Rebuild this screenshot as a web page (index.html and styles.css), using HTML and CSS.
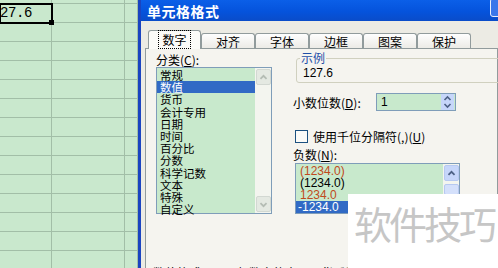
FILE: index.html
```html
<!DOCTYPE html>
<html lang="zh-CN">
<head>
    <meta charset="UTF-8">
    <title>单元格格式</title>
    <link rel="stylesheet" href="styles.css">
</head>
<body>
    <div class="screen">
        <div class="sheet">
            <div class="cell"></div><div class="cell"></div><div class="cell"></div>
            <div class="cell active"><span>127.6</span></div><div class="cell"></div><div class="cell"></div>
            <div class="cell"></div><div class="cell"></div><div class="cell"></div>
            <div class="cell"></div><div class="cell"></div><div class="cell"></div>
            <div class="cell"></div><div class="cell"></div><div class="cell"></div>
            <div class="cell"></div><div class="cell"></div><div class="cell"></div>
            <div class="cell"></div><div class="cell"></div><div class="cell"></div>
            <div class="cell"></div><div class="cell"></div><div class="cell"></div>
            <div class="cell"></div><div class="cell"></div><div class="cell"></div>
            <div class="cell"></div><div class="cell"></div><div class="cell"></div>
            <div class="cell"></div><div class="cell"></div><div class="cell"></div>
            <div class="cell"></div><div class="cell"></div><div class="cell"></div>
            <div class="cell"></div><div class="cell"></div><div class="cell"></div>
            <div class="cell"></div><div class="cell"></div><div class="cell"></div>
            <div class="cell"></div><div class="cell"></div><div class="cell"></div>
        </div>

        <div class="dialog">
            <div class="titlebar">
                <span class="title">单元格格式</span>
                <span class="close"></span>
            </div>
            <div class="body">
                <div class="tabs">
                    <div class="tab active"><span>数字</span></div>
                    <div class="tab">对齐</div>
                    <div class="tab">字体</div>
                    <div class="tab">边框</div>
                    <div class="tab">图案</div>
                    <div class="tab">保护</div>
                </div>
                <div class="panel">
                    <div class="cols">
                        <div class="left">
                            <div class="label">分类(<u>C</u>):</div>
                            <div class="listbox cats">
                                <ul>
                                    <li>常规</li>
                                    <li class="sel">数值</li>
                                    <li>货币</li>
                                    <li>会计专用</li>
                                    <li>日期</li>
                                    <li>时间</li>
                                    <li>百分比</li>
                                    <li>分数</li>
                                    <li>科学记数</li>
                                    <li>文本</li>
                                    <li>特殊</li>
                                    <li>自定义</li>
                                </ul>
                                <div class="scroll">
                                    <div class="arrow off">
                                        <svg width="15" height="15" viewBox="0 0 15 15"><polyline points="4,9 7.5,5.5 11,9" fill="none" stroke="#b4bcb4" stroke-width="2"/></svg>
                                    </div>
                                    <div class="track"></div>
                                    <div class="arrow off">
                                        <svg width="15" height="15" viewBox="0 0 15 15"><polyline points="4,6 7.5,9.5 11,6" fill="none" stroke="#b4bcb4" stroke-width="2"/></svg>
                                    </div>
                                </div>
                            </div>
                        </div>

                        <div class="right">
                            <fieldset class="sample">
                                <legend>示例</legend>
                                <div class="num">127.6</div>
                            </fieldset>

                            <div class="spin-row">
                                <span class="spin-label">小数位数(<u>D</u>):</span>
                                <div class="spin">
                                    <span class="num">1</span>
                                    <div class="spin-btns">
                                        <svg width="13" height="8" viewBox="0 0 13 8"><polyline points="3.5,6 6.5,3 9.5,6" fill="none" stroke="#4d6185" stroke-width="1.6"/></svg>
                                        <svg width="13" height="8" viewBox="0 0 13 8"><polyline points="3.5,2 6.5,5 9.5,2" fill="none" stroke="#4d6185" stroke-width="1.6"/></svg>
                                    </div>
                                </div>
                            </div>

                            <div class="check-row">
                                <span class="checkbox"></span>
                                <span>使用千位分隔符(,)(<u>U</u>)</span>
                            </div>

                            <div class="label neg-label">负数(<u>N</u>):</div>
                            <div class="listbox neg">
                                <ul class="num">
                                    <li class="red">(1234.0)</li>
                                    <li>(1234.0)</li>
                                    <li class="red">1234.0</li>
                                    <li class="sel">-1234.0</li>
                                </ul>
                                <div class="scroll">
                                    <div class="arrow">
                                        <svg width="15" height="15" viewBox="0 0 15 15"><polyline points="4,9 7.5,5.5 11,9" fill="none" stroke="#4d6185" stroke-width="2"/></svg>
                                    </div>
                                    <div class="thumb"></div>
                                </div>
                            </div>
                        </div>
                    </div>
                    <p class="desc">数值格式用于一般数字的表示。货币和会计格式则提供货币值计算的专用格式。</p>
                </div>
            </div>
            <div class="watermark">软件技巧</div>
        </div>
    </div>
</body>
</html>
```

FILE: styles.css
```css
body {
    margin: 0;
    font-family: "Noto Sans CJK SC", sans-serif;
    font-size: 12px;
    color: #000;
}

ul {
    margin: 0;
    padding: 0;
    list-style: none;
}

.num {
    font-family: "Liberation Sans", Arial, sans-serif;
    font-size: 12px;
}

.screen {
    display: flex;
    width: 498px;
    height: 268px;
    overflow: hidden;
}

/* spreadsheet behind the dialog */
.sheet {
    flex: none;
    width: 138px;
    background: #c9e8cd;
    display: grid;
    grid-template-columns: 52px 73px 13px;
    grid-template-rows: 4px;
    grid-auto-rows: 19px;
    align-content: start;
}

.cell {
    box-sizing: border-box;
    border-right: 1px solid #a2bea7;
    border-bottom: 1px solid #a2bea7;
}

.cell.active {
    position: relative;
    outline: 2px solid #000;
    outline-offset: -1px;
    font-family: "Liberation Mono", monospace;
    font-size: 14px;
    line-height: 19px;
}

.cell.active span {
    display: block;
    margin-left: -8px;
    letter-spacing: -0.4px;
}

.cell.active::after {
    content: "";
    position: absolute;
    right: -3px;
    bottom: -3px;
    width: 5px;
    height: 5px;
    background: #000;
}

/* dialog */
.dialog {
    flex: 1;
    position: relative;
    overflow: hidden;
    border-left: 3px solid #1a44c0;
    background: #ecebe4;
    display: flex;
    flex-direction: column;
}

.titlebar {
    flex: none;
    height: 21px;
    display: flex;
    align-items: center;
    padding-left: 6px;
    background: linear-gradient(#0b5fe8, #0553dc 55%, #0a4cc9);
    color: #fff;
}

.title {
    font-size: 14px;
    font-weight: bold;
    letter-spacing: 0.5px;
}

.close {
    align-self: flex-start;
    margin: -2px -15px 0 auto;
    width: 21px;
    height: 17px;
    border: 1px solid #e8eefc;
    border-radius: 3px;
    background: #3a76ea;
}

.body {
    flex: 1;
    padding: 9px 0 0 4px;
}

.tabs {
    display: flex;
    align-items: flex-end;
    height: 18px;
    margin-left: 3px;
    position: relative;
    z-index: 1;
}

.tab {
    box-sizing: border-box;
    width: 54px;
    height: 15px;
    border: 1px solid #919b9c;
    border-bottom: none;
    border-radius: 3px 3px 0 0;
    background: linear-gradient(#fefefe, #ecebe6);
    text-align: center;
    line-height: 15px;
}

.tab.active {
    width: 53px;
    height: 19px;
    margin-bottom: -1px;
    background: #fbfbf8;
    line-height: 17px;
}

.tab.active span {
    outline: 1px dotted #000;
    padding: 0 3px;
}

.panel {
    border: 1px solid #919b9c;
    background: #f5f4ef;
    height: 260px;
    padding: 3px 0 0 10px;
}

.cols {
    display: flex;
}

.left {
    width: 116px;
}

.label {
    line-height: 15px;
}

.listbox {
    display: flex;
    box-sizing: border-box;
    border: 1px solid #7f9db9;
    background: #c8e9cc;
}

.listbox ul {
    flex: 1;
    padding-top: 1px;
}

.listbox li {
    padding-left: 3px;
}

.listbox li.sel {
    background: #316ac5;
    color: #fff;
}

.cats {
    height: 147px;
}

.cats li {
    font-size: 11.5px;
    line-height: 12.2px;
    height: 12.2px;
}

.scroll {
    flex: none;
    width: 16px;
    display: flex;
    flex-direction: column;
    background: #f3f5ef;
}

.track {
    flex: 1;
}

.arrow {
    box-sizing: border-box;
    height: 16px;
    margin: 1px 0 0 1px;
    width: 15px;
    border: 1px solid #b7c9f1;
    border-radius: 2px;
    background: #c6d6fa;
    display: flex;
    align-items: center;
    justify-content: center;
}

.arrow.off {
    border-color: #d2d8d2;
    background: #e4e9e2;
}

.arrow.off:last-child {
    margin-bottom: 1px;
}

.thumb {
    height: 11px;
    margin: 3px 0 0 1px;
    width: 15px;
    box-sizing: border-box;
    border: 1px solid #b7c9f1;
    border-radius: 2px;
    background: #d4e0fb;
}

.right {
    flex: 1;
    margin-left: 21px;
}

.sample {
    margin: 0 -40px 0 3px;
    padding: 2px 6px 2px;
    border: 1px solid #d0d0bf;
    border-radius: 3px;
}

.sample legend {
    margin-left: -3px;
    padding: 0 1px;
    line-height: 12px;
    color: #1f4fa8;
}

.sample .num {
    line-height: 14px;
}

.spin-row {
    display: flex;
    align-items: center;
    margin-top: 10px;
    height: 18px;
}

.spin-label {
    width: 83px;
}

.spin {
    box-sizing: border-box;
    width: 80px;
    height: 18px;
    border: 1px solid #7f9db9;
    background: #c8e9cc;
    display: flex;
    align-items: center;
    padding-left: 4px;
}

.spin .num {
    flex: 1;
}

.spin-btns {
    display: flex;
    flex-direction: column;
    background: #c6d6fa;
    margin-right: 1px;
}

.spin-btns svg {
    display: block;
}

.check-row {
    display: flex;
    align-items: center;
    gap: 5px;
    margin-top: 19px;
    line-height: 13px;
}

.checkbox {
    box-sizing: border-box;
    width: 13px;
    height: 13px;
    margin-left: 2px;
    border: 1px solid #1c5180;
    background: #fbfbf8;
}

.neg-label {
    margin-top: 5px;
    line-height: 14px;
}

.neg {
    width: 165px;
    height: 51px;
    margin-left: 2px;
    margin-top: 1px;
}

.neg li {
    line-height: 12px;
    height: 12px;
    padding-left: 4px;
}

.neg li.red {
    color: #c04a20;
}

.neg li.sel {
    padding-left: 2px;
    width: 60px;
}

.desc {
    margin: 52px 0 0 -3px;
    line-height: 14px;
    white-space: nowrap;
}

.watermark {
    position: absolute;
    left: 207px;
    top: 194px;
    width: 160px;
    height: 80px;
    background: #fff;
    color: #c6c6c6;
    font-size: 38px;
    letter-spacing: -3px;
    line-height: 38px;
    padding: 10px 0 0 6px;
    box-sizing: border-box;
}
```
